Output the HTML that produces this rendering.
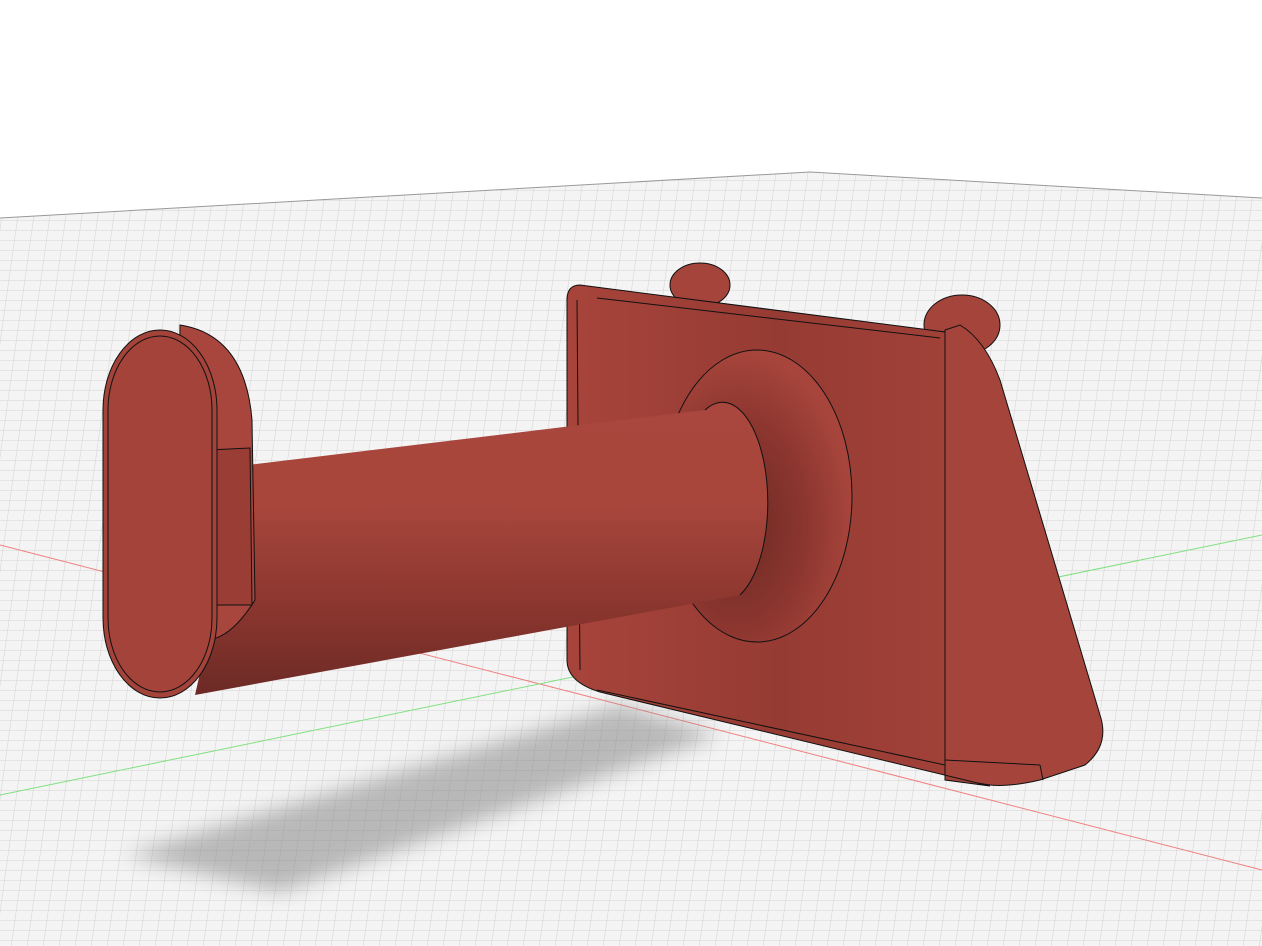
<!DOCTYPE html>
<html><head><meta charset="utf-8"><style>html,body{margin:0;padding:0;background:#fff}svg{display:block}</style></head>
<body>
<svg width="1262" height="946" viewBox="0 0 1262 946" xmlns="http://www.w3.org/2000/svg">
<defs>
<pattern id="g" width="16" height="10" patternUnits="userSpaceOnUse" patternTransform="skewX(-8)">
<rect width="16" height="10" fill="#f4f4f4"/>
<path d="M0 0H16M0 0V10" stroke="#d2d2d2" stroke-width="1" fill="none"/>
</pattern>
<linearGradient id="cyl" x1="0" y1="0" x2="0" y2="1">
<stop offset="0" stop-color="#a9463d"/><stop offset="0.35" stop-color="#a8463c"/><stop offset="0.75" stop-color="#86342d"/><stop offset="1" stop-color="#6c2a25"/>
</linearGradient>
<linearGradient id="plate" x1="0" y1="0" x2="1" y2="0">
<stop offset="0" stop-color="#a7443b"/><stop offset="0.5" stop-color="#963b33"/><stop offset="1" stop-color="#a4433a"/>
</linearGradient>
<radialGradient id="fl" cx="0.4" cy="0.6" r="0.6">
<stop offset="0" stop-color="#6c2924"/><stop offset="0.6" stop-color="#8c362f"/><stop offset="1" stop-color="#a7453c"/>
</radialGradient>
<filter id="blur"><feGaussianBlur stdDeviation="10"/></filter>
</defs>
<polygon points="0,218 810,172 1262,198 1262,946 0,946" fill="url(#g)"/>
<polyline points="0,218 810,172 1262,198" fill="none" stroke="#999" stroke-width="1"/>
<line x1="0" y1="545" x2="1262" y2="870" stroke="#f08080" stroke-width="1"/>
<line x1="0" y1="795" x2="1262" y2="535" stroke="#80e080" stroke-width="1"/>
<polygon points="125,855 280,892 720,735 620,705" fill="#888" opacity="0.55" filter="url(#blur)"/>
<ellipse cx="700" cy="285" rx="30" ry="22" fill="#a4443b" stroke="#111"/>
<ellipse cx="962" cy="325" rx="38" ry="30" fill="#a4443b" stroke="#111"/>
<path d="M945,330 L960,325 Q985,340 1000,380 L1100,715 Q1110,745 1085,765 L1040,780 Q1010,787 990,785 L945,778 Z" fill="#a5443b" stroke="#111"/>
<line x1="945" y1="760" x2="1040" y2="765" stroke="#111"/>
<line x1="1040" y1="765" x2="1043" y2="780" stroke="#111"/>
<path d="M580,285 L945,332 L945,780 L990,786 L600,692 Q567,682 567,660 L567,300 Q567,285 580,285 Z" fill="url(#plate)" stroke="#111"/>
<line x1="597" y1="298" x2="940" y2="338" stroke="#111"/>
<line x1="577" y1="300" x2="580" y2="670" stroke="#111"/>
<line x1="597" y1="690" x2="945" y2="765" stroke="#111"/>
<line x1="945" y1="332" x2="945" y2="780" stroke="#111"/>
<ellipse cx="757" cy="496" rx="95" ry="146" fill="url(#fl)" stroke="#111"/>
<path d="M248,465 L705,410 A42,93 0 0 1 740,595 L195,695 Z" fill="url(#cyl)"/>
<path d="M705,410 A42,93 0 0 1 740,595" fill="none" stroke="#111"/>
<path d="M180,325 Q245,335 252,420 L255,600 Q230,640 205,640 L175,600 Z" fill="#a8453c" stroke="#111"/>
<path d="M208,450 L250,448 L252,605 L215,605" fill="#9a3d35" stroke="#111"/>
<rect x="103" y="330" width="114" height="368" rx="57" ry="80" fill="#a3433a" stroke="#111"/>
<rect x="108" y="336" width="104" height="356" rx="52" ry="74" fill="none" stroke="#111"/>
</svg>
</body></html>
